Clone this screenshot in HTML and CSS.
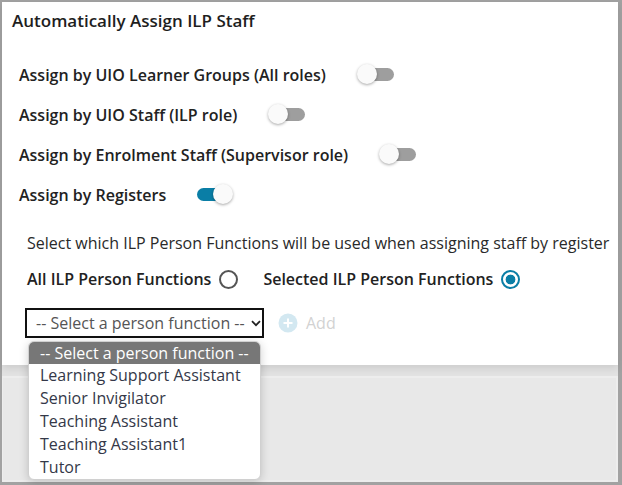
FILE: index.html
```html
<!DOCTYPE html>
<html>
<head>
<meta charset="utf-8">
<link rel="stylesheet" href="styles.css">
</head>
<body>
<div class="frame">
  <div class="panel">
    <div class="title">Automatically Assign ILP Staff</div>
    <div class="rows">
      <div class="row"><span class="label">Assign by UIO Learner Groups (All roles)</span><span class="toggle"><span class="track"></span><span class="knob"></span></span></div>
      <div class="row"><span class="label">Assign by UIO Staff (ILP role)</span><span class="toggle"><span class="track"></span><span class="knob"></span></span></div>
      <div class="row"><span class="label">Assign by Enrolment Staff (Supervisor role)</span><span class="toggle"><span class="track"></span><span class="knob"></span></span></div>
      <div class="row"><span class="label">Assign by Registers</span><span class="toggle on"><span class="track"></span><span class="knob"></span></span></div>
    </div>
    <div class="sub">
      <div class="hint">Select which ILP Person Functions will be used when assigning staff by register</div>
      <div class="radios">
        <span class="label">All ILP Person Functions</span><span class="radio"></span>
        <span class="label second">Selected ILP Person Functions</span><span class="radio checked"></span>
      </div>
      <div class="pick">
        <div class="selectwrap">
          <div class="select">
            <span>-- Select a person function --</span>
            <svg class="chev" width="10" height="7" viewBox="0 0 10 7"><path d="M1 1.2 L5 5.2 L9 1.2" fill="none" stroke="#222" stroke-width="1.8"/></svg>
          </div>
          <div class="dropdown">
            <div class="opt sel">-- Select a person function --</div>
            <div class="opt">Learning Support Assistant</div>
            <div class="opt">Senior Invigilator</div>
            <div class="opt">Teaching Assistant</div>
            <div class="opt">Teaching Assistant1</div>
            <div class="opt">Tutor</div>
          </div>
        </div>
        <span class="add">
          <svg width="20" height="20" viewBox="0 0 20 20"><circle cx="10" cy="10" r="9.5" fill="#d3e8f1"/><path d="M10 5.5 V14.5 M5.5 10 H14.5" stroke="#fff" stroke-width="2"/></svg>
          <span class="addtext">Add</span>
        </span>
      </div>
    </div>
  </div>
  <div class="footer">
    <div class="footbox"></div>
  </div>
</div>
</body>
</html>
```
FILE: styles.css
```css
* { box-sizing: border-box; }
html, body { margin: 0; padding: 0; background: #fff; }
body { font-family: "Open Sans", "Liberation Sans", sans-serif; color: #222; }

.frame {
  width: 622px;
  height: 485px;
  border-style: solid;
  border-color: #a2a2a2;
  border-width: 2px 4px 3px 2px;
  display: flex;
  flex-direction: column;
  background: #e7e7e7;
}

.panel {
  position: relative;
  z-index: 2;
  height: 363px;
  background: #fff;
  padding: 8px 0 0 10px;
  box-shadow: 0 3px 8px rgba(0,0,0,0.10);
}

.title {
  font-size: 17px;
  font-weight: 600;
  line-height: 22px;
  color: #1e1e1e;
}

.rows { margin-top: 23px; padding-left: 7px; }
.row { height: 40px; display: flex; align-items: center; }
.label { font-size: 16px; font-weight: 600; color: #222; white-space: nowrap; }

.toggle {
  position: relative;
  width: 38px;
  height: 20px;
  margin-left: 31px;
  display: inline-block;
}
.track {
  position: absolute;
  left: 2px; top: 3px;
  width: 35px; height: 13px;
  border-radius: 7px;
  background: #9e9e9e;
}
.knob {
  position: absolute;
  left: 0; top: -1px;
  width: 20px; height: 20px;
  border-radius: 50%;
  background: #fafafa;
  box-shadow: 0 1px 3px rgba(0,0,0,0.35);
}
.toggle.on { margin-left: 29px; }
.toggle.on .track { background: #0a7ea6; width: 32px; }
.toggle.on .knob { left: 18px; }

.sub { padding-left: 15px; margin-top: 18px; }
.hint { font-size: 16px; line-height: 20px; color: #2a2a2a; white-space: nowrap; }

.radios { margin-top: 14px; height: 24px; display: flex; align-items: center; }
.radio {
  width: 19px; height: 19px;
  border-radius: 50%;
  border: 2px solid #555;
  margin-left: 8px;
  display: inline-block;
}
.radio.checked {
  border: 2.5px solid #0a7ea6;
  background: radial-gradient(circle, #0a7ea6 0 4.6px, #fff 5.2px);
}
.second { margin-left: 25px; }

.pick { margin-top: 17px; display: flex; align-items: center; }
.selectwrap { position: relative; margin-left: -2px; }
.select {
  width: 239px; height: 30px;
  border: 2px solid #111;
  padding: 0 0 0 9px;
  display: flex; align-items: center; justify-content: space-between;
  font-size: 16px; color: #555; white-space: nowrap;
}
.chev { margin-right: 1px; margin-top: 1px; flex: none; }

.dropdown {
  position: absolute;
  left: 3px; top: 33px;
  width: 233px;
  background: #fff;
  border-radius: 6px;
  border: 1px solid #d0d0d0;
  box-shadow: 0 2px 10px rgba(0,0,0,0.18);
  overflow: hidden;
  z-index: 5;
}
.opt { height: 23px; line-height: 23px; padding-left: 11px; font-size: 16px; color: #343848; white-space: nowrap; }
.opt.sel { height: 22px; line-height: 22px; background: #777; color: #fff; }

.add { display: flex; align-items: center; margin-left: 14px; }
.addtext { margin-left: 8px; font-size: 16px; color: #d2d2d2; }

.footer {
  flex: 1;
  background: #e2e2e2;
  padding-top: 11px;
}
.footbox {
  height: 100%;
  background: #e8e8e8;
  border: 2px solid #ededed;
  border-left-width: 1px;
}
```
